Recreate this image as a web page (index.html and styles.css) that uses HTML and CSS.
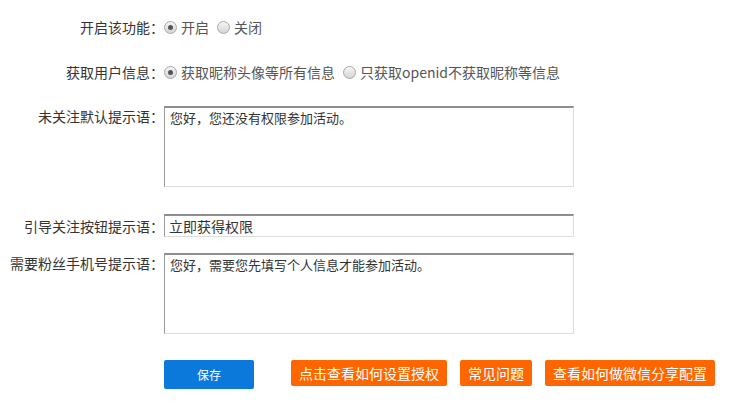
FILE: index.html
```html
<!DOCTYPE html>
<html>
	<head>
		<meta charset="UTF-8">
		<title>授权设置</title>
		<link rel="stylesheet" href="styles.css">
	</head>
	<body>
		<form class="form">
			<div class="row row-radio first">
				<label class="label">开启该功能：</label>
				<div class="field">
					<label class="opt"><input type="radio" name="open" checked>开启</label>
					<label class="opt"><input type="radio" name="open">关闭</label>
				</div>
			</div>
			<div class="row row-radio second">
				<label class="label">获取用户信息：</label>
				<div class="field">
					<label class="opt"><input type="radio" name="info" checked>获取昵称头像等所有信息</label>
					<label class="opt"><input type="radio" name="info">只获取openid不获取昵称等信息</label>
				</div>
			</div>
			<div class="row third">
				<label class="label">未关注默认提示语：</label>
				<textarea class="area">您好，您还没有权限参加活动。</textarea>
			</div>
			<div class="row fourth">
				<label class="label">引导关注按钮提示语：</label>
				<input class="text" type="text" value="立即获得权限">
			</div>
			<div class="row fifth">
				<label class="label">需要粉丝手机号提示语：</label>
				<textarea class="area">您好，需要您先填写个人信息才能参加活动。</textarea>
			</div>
			<div class="row buttons">
				<span class="label"></span>
				<a href="javascript:;" class="btn btn-save">保存</a>
				<a href="javascript:;" class="btn btn-orange btn-auth">点击查看如何设置授权</a>
				<a href="javascript:;" class="btn btn-orange">常见问题</a>
				<a href="javascript:;" class="btn btn-orange">查看如何做微信分享配置</a>
			</div>
		</form>
	</body>
</html>
```

FILE: styles.css
```css
* {margin:0px; border:0px; padding:0px; box-sizing:border-box;}
body {
	font-family:"Noto Sans CJK SC", "Microsoft YaHei", sans-serif;
	font-size:14px;
	color:#333;
	background:#fff;
}
.form {
	width:756px;
	padding-top:17px;
}
.row {
	display:flex;
	align-items:center;
}
.row-radio {
	height:20px;
}
.second {margin-top:25px;}
.third {margin-top:24px; align-items:flex-start;}
.fourth {margin-top:27px;}
.fifth {margin-top:16px; align-items:flex-start;}
.buttons {margin-top:26px; align-items:flex-start;}

.label {
	width:164px;
	flex:none;
	text-align:right;
	line-height:20px;
}
.field {
	display:flex;
	align-items:center;
	color:#555;
	line-height:20px;
}
.opt {
	display:flex;
	align-items:center;
	margin-right:8px;
	white-space:pre;
}
.opt input {
	-webkit-appearance:none;
	appearance:none;
	width:13px;
	height:13px;
	border:1px solid #a8a8a8;
	border-radius:50%;
	background:linear-gradient(#f6f6f6, #d4d4d4);
	position:relative;
	margin-right:4px;
}
.opt input:checked:after {
	content:"";
	position:absolute;
	left:3px;
	top:3px;
	width:5px;
	height:5px;
	border-radius:50%;
	background:#555;
}
.area {
	width:410px;
	height:81px;
	border:1px solid #ddd;
	border-top:2px solid #8f8f8f;
	border-left:1px solid #9a9a9a;
	padding:1px 5px;
	font-family:"Noto Sans CJK SC", sans-serif;
	font-size:13px;
	line-height:17px;
	color:#333;
	resize:none;
	outline:none;
}
.text {
	width:410px;
	height:23px;
	border:1px solid #ddd;
	border-top:2px solid #8f8f8f;
	border-left:1px solid #9a9a9a;
	padding:0px 4px;
	font-family:"Noto Sans CJK SC", sans-serif;
	font-size:14px;
	color:#333;
	outline:none;
}
.btn {
	display:block;
	color:#fff;
	text-decoration:none;
	text-align:center;
	border-radius:2px;
	white-space:nowrap;
}
.btn-save {
	width:90px;
	height:29px;
	line-height:29px;
	font-size:12px;
	background:#0b78db;
}
.btn-orange {
	height:26px;
	line-height:26px;
	padding:0px 8px;
	background:#ff6600;
	font-size:14px;
	margin-left:13px;
}
.btn-auth {margin-left:37px;}
```
